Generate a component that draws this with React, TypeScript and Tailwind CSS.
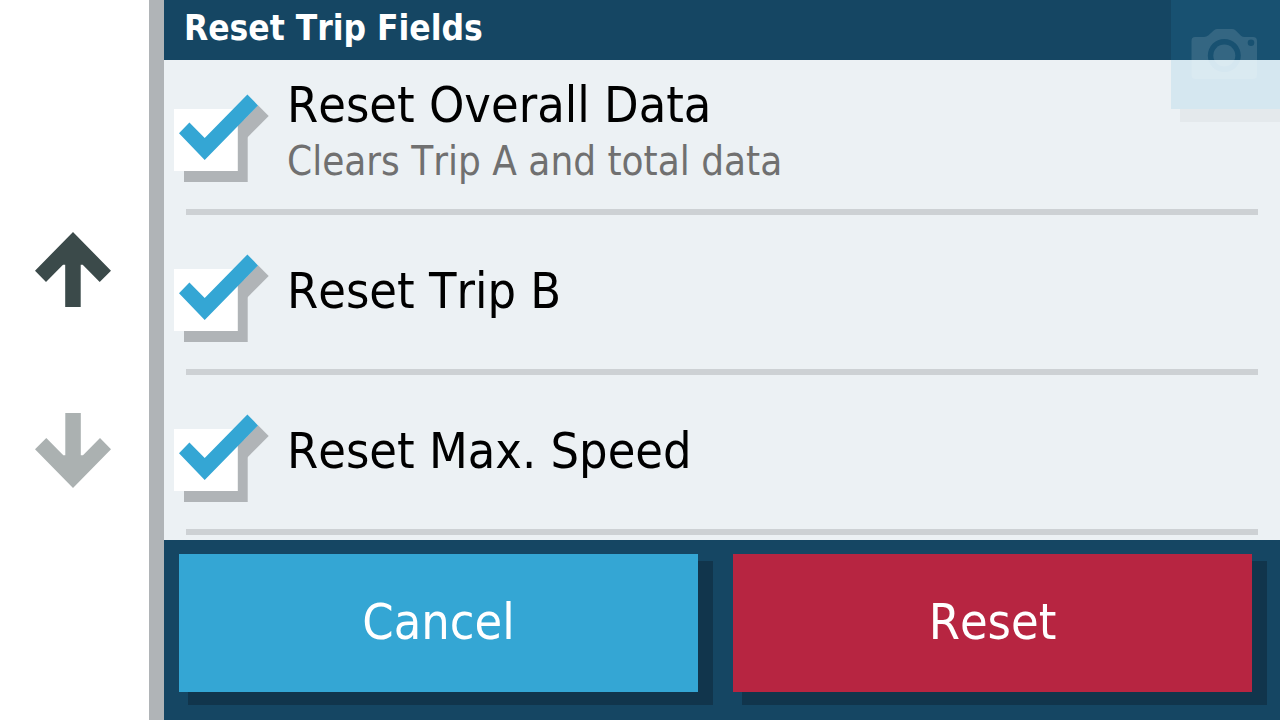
import { useState } from "react";

const FIELDS = [
  { id: "overall", title: "Reset Overall Data", note: "Clears Trip A and total data" },
  { id: "tripB", title: "Reset Trip B", note: "" },
  { id: "maxSpeed", title: "Reset Max. Speed", note: "" },
];

function ArrowUp({ className }: { className: string }) {
  return (
    <svg viewBox="0 0 76 75" className={className} fill="currentColor" aria-hidden="true">
      <path d="M38 0 76 38.7 64.7 50 47.7 32.7H45.7V75H30.2V32.7H28L11 50 0 38.7Z" />
    </svg>
  );
}

function CheckMark({ checked }: { checked: boolean }) {
  return (
    <svg viewBox="0 0 96 88" className="h-[88px] w-[96px]" aria-hidden="true">
      <path fill="#b0b4b7" d="M10 26H73.7V88H10Z" />
      {checked && <path fill="#b0b4b7" d="M84 11.2 94.7 22 41 76 30.5 66Z" />}
      <path fill="#fff" d="M0 15H63.8V77H0Z" />
      {checked && (
        <path fill="#34a6d4" d="M5 39.2 15.4 28.4 30.7 44 73.4 .6 84 11.4 30.7 66Z" />
      )}
    </svg>
  );
}

function CameraIcon() {
  return (
    <svg
      viewBox="0 0 66 50"
      className="h-[50px] w-[66px] text-white/12"
      fill="currentColor"
      aria-hidden="true"
    >
      <path
        fillRule="evenodd"
        d="M4 8H13Q15.500 8 17.500 6.200L23 1.200Q24.500 0 26.500 0H41Q43 0 44.400 1.200L50 6.700Q51.500 8 53.500 8H62Q66 8 66 12V46Q66 50 62 50H4.500Q.5 50 .5 46V12Q.5 8 4 8ZM33.300 10A16.500 16.500 0 1 0 33.300 43A16.500 16.500 0 1 0 33.300 10ZM60 10.400A3.300 3.300 0 1 0 60 17A3.300 3.300 0 1 0 60 10.400Z"
      />
      <circle cx="33.3" cy="26.5" r="11" />
    </svg>
  );
}

export default function App() {
  const [checked, setChecked] = useState<Record<string, boolean>>({
    overall: true,
    tripB: true,
    maxSpeed: true,
  });

  const toggle = (id: string) => setChecked((prev) => ({ ...prev, [id]: !prev[id] }));

  return (
    <div className="flex h-screen overflow-hidden bg-white font-['DejaVu_Sans_Condensed','DejaVu_Sans',sans-serif] [font-kerning:none]">
      <nav className="flex w-[164px] shrink-0 flex-col items-center justify-center gap-[106px] border-r-[15px] border-[#b0b4b7] pr-[3px]">
        <button type="button" aria-label="Scroll up" className="text-[#3b4a4a]">
          <ArrowUp className="h-[75px] w-[76px]" />
        </button>
        <button type="button" aria-label="Scroll down" className="text-[#abb1b1]">
          <ArrowUp className="h-[75px] w-[76px] rotate-180" />
        </button>
      </nav>

      <div className="relative flex min-w-0 flex-1 flex-col">
        <header className="flex h-[60px] shrink-0 items-center bg-[#154663] pb-1 pl-5">
          <h1 className="text-[35px] leading-[44px] font-bold text-white">Reset Trip Fields</h1>
        </header>

        <main className="min-h-0 flex-1 overflow-hidden bg-[#ecf1f4]">
          <ul className="-mt-[5px]">
            {FIELDS.map((field) => (
              <li key={field.id}>
                <label className="flex h-[154px] pl-[10px]">
                  <input
                    type="checkbox"
                    className="sr-only"
                    checked={checked[field.id]}
                    onChange={() => toggle(field.id)}
                  />
                  <span className="flex items-end pb-[27px]">
                    <CheckMark checked={checked[field.id]} />
                  </span>
                  <span className="flex flex-col justify-center pb-[3px] pl-[17px]">
                    <span className="text-[50px] leading-[60px] text-black">{field.title}</span>
                    {field.note && (
                      <span className="text-[40px] leading-[52px] text-[#707070]">{field.note}</span>
                    )}
                  </span>
                </label>
                <div className="mx-[22px] h-[6px] bg-[#cdd1d4]" />
              </li>
            ))}
          </ul>
        </main>

        <footer className="grid h-[180px] shrink-0 grid-cols-2 gap-[35px] bg-[#154663] pt-[14px] pr-[28px] pb-[28px] pl-[15px] text-[50px] leading-[60px] text-white">
          <button type="button" className="bg-[#34a6d4] pb-[2px] shadow-[12px_10px_0_3px_#11354c]">
            Cancel
          </button>
          <button type="button" className="bg-[#b72541] pb-[2px] shadow-[12px_10px_0_3px_#11354c]">
            Reset
          </button>
        </footer>

        {/* faded screenshot button floating over the corner */}
        <button
          type="button"
          aria-label="Take screenshot"
          className="absolute top-0 right-0 flex h-[109px] w-[109px] items-end bg-[#34a6d4]/12 pb-[30px] pl-5 shadow-[12px_10px_0_3px_#b0b4b71f]"
        >
          <CameraIcon />
        </button>
      </div>
    </div>
  );
}
